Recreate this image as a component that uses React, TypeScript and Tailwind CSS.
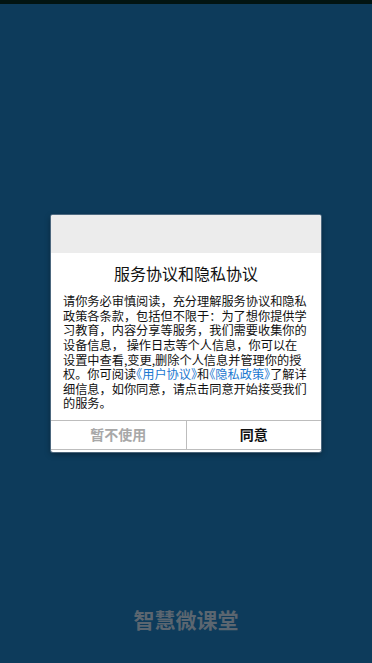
const lines = [
  '请你务必审慎阅读，充分理解服务协议和隐私',
  '政策各条款，包括但不限于：为了想你提供学',
  '习教育，内容分享等服务，我们需要收集你的',
  '设备信息， 操作日志等个人信息，你可以在',
  '设置中查看,变更,删除个人信息并管理你的授',
];

const font = { fontFamily: '"Noto Sans CJK SC", "Noto Sans", sans-serif' };

function Link({ children }: { children: string }) {
  return <span className="text-[#1a78d0] [font-feature-settings:'halt']">{children}</span>;
}

function PrivacyDialog() {
  return (
    <div className="w-[270px] rounded-[2px] bg-white shadow-[0_0_0_1px_rgba(120,140,160,0.6),0_2px_6px_rgba(0,0,0,0.4)]">
      <div className="h-[38px] rounded-t-[2px] bg-[#ececec]" />
      <div className="pt-[9px] text-center text-[16px] leading-[22px] text-[#111]">服务协议和隐私协议</div>
      <div className="pl-[12px] pr-[10px] pt-[10px] pb-[9px] text-[12.2px] leading-[14.6px] text-[#111]">
        {lines.map((l) => (
          <div key={l} className="whitespace-pre">{l}</div>
        ))}
        <div className="whitespace-pre">
          权。你可阅读<Link>《用户协议》</Link>和<Link>《隐私政策》</Link>了解详
        </div>
        <div className="whitespace-pre">细信息，如你同意，请点击同意开始接受我们</div>
        <div className="whitespace-pre">的服务。</div>
      </div>
      <div className="flex h-[30px] border-y border-[#bdbdbd]">
        <button className="flex flex-1 items-center justify-center text-[14px] font-bold text-[#a8a8a8]">暂不使用</button>
        <div className="w-px bg-[#bdbdbd]" />
        <button className="flex flex-1 items-center justify-center text-[14px] font-bold text-[#111]">同意</button>
      </div>
      <div className="h-[2px]" />
    </div>
  );
}

export default function App() {
  return (
    <div className="relative flex h-[663px] w-full flex-col bg-[#0d3b5b]" style={font}>
      <div className="h-[4px] bg-[#021412]" />
      <div className="flex-1" />
      <div className="pb-[30px] text-center text-[21px] font-bold leading-[28px] text-[#5b6670]">智慧微课堂</div>
      <div className="absolute inset-0 top-[4px] flex items-center justify-center">
        <PrivacyDialog />
      </div>
    </div>
  );
}
